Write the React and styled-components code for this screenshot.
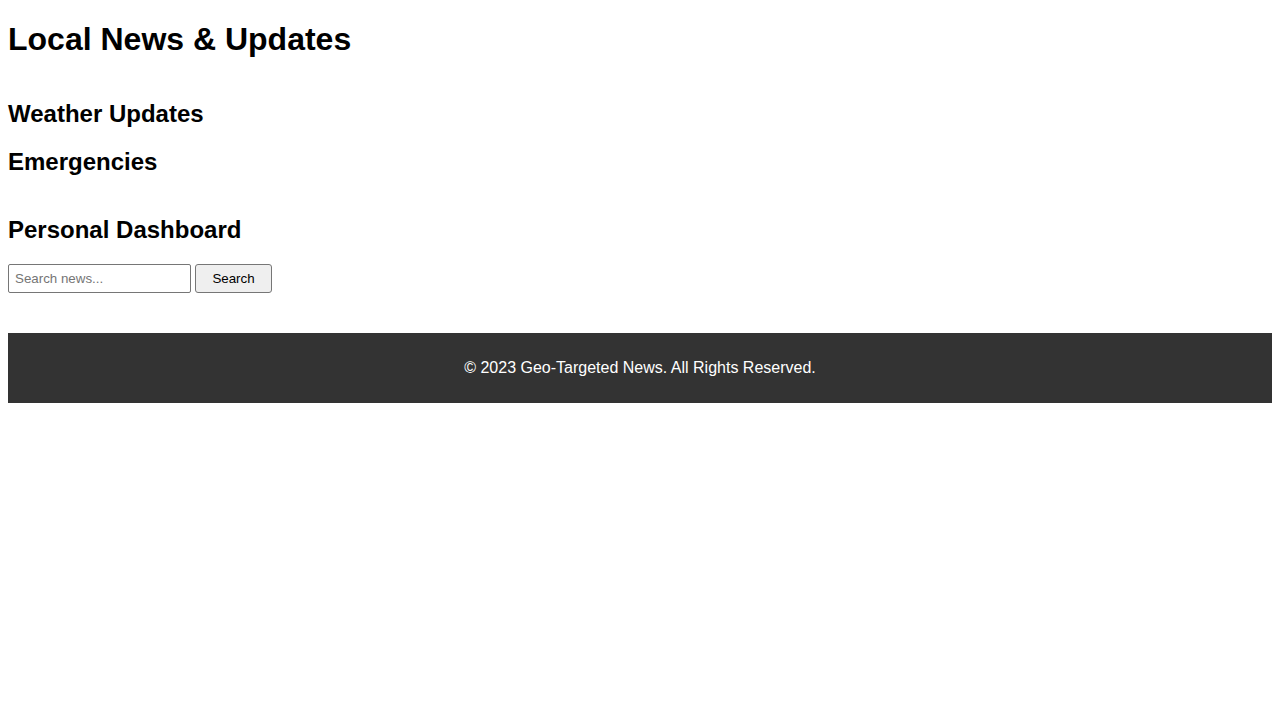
import React from "react";
import styled, { createGlobalStyle } from "styled-components";

const GlobalStyle = createGlobalStyle`
  body {
    margin: 0;
    font-family: "Liberation Sans", Arial, sans-serif;
    color: #000;
    background: #fff;
  }
`;

const Page = styled.div`
  display: flex;
  flex-direction: column;
  padding: 0 8px;
`;

const Header = styled.header``;

const Title = styled.h1`
  font-size: 32px;
  font-weight: bold;
  margin: 21px 0 22.44px;
`;

const Section = styled.section``;

const SectionTitle = styled.h2`
  font-size: 24px;
  font-weight: bold;
  margin: 19.92px 0;
`;

const SearchForm = styled.form`
  display: flex;
  gap: 4px;
  margin: 1px 0 40px;
`;

const SearchInput = styled.input`
  box-sizing: border-box;
  width: 183px;
  height: 29px;
  padding: 0 6px;
  font-family: "Liberation Sans", Arial, sans-serif;
  font-size: 13.33px;
  border: 1px solid #767676;
  border-radius: 2px;

  &::placeholder {
    color: #757575;
  }
`;

const SearchButton = styled.button`
  box-sizing: border-box;
  width: 77px;
  height: 29px;
  font-family: "Liberation Sans", Arial, sans-serif;
  font-size: 13.33px;
  color: #000;
  background: #efefef;
  border: 1px solid #767676;
  border-radius: 3px;
`;

const Footer = styled.footer`
  background: #333;
  color: #fff;
  text-align: center;
  padding: 10px 0;
`;

const FooterText = styled.p`
  margin: 16px 0;
  font-size: 16px;
`;

const App = () => {
  return (
    <>
      <GlobalStyle />
      <Page>
        <Header>
          <Title>Local News &amp; Updates</Title>
        </Header>
        <Section>
          <SectionTitle>Weather Updates</SectionTitle>
          <SectionTitle>Emergencies</SectionTitle>
        </Section>
        <Section>
          <SectionTitle>Personal Dashboard</SectionTitle>
          <SearchForm onSubmit={(e) => e.preventDefault()}>
            <SearchInput type="text" placeholder="Search news..." />
            <SearchButton type="submit">Search</SearchButton>
          </SearchForm>
        </Section>
        <Footer>
          <FooterText>© 2023 Geo-Targeted News. All Rights Reserved.</FooterText>
        </Footer>
      </Page>
    </>
  );
};

export default App;
